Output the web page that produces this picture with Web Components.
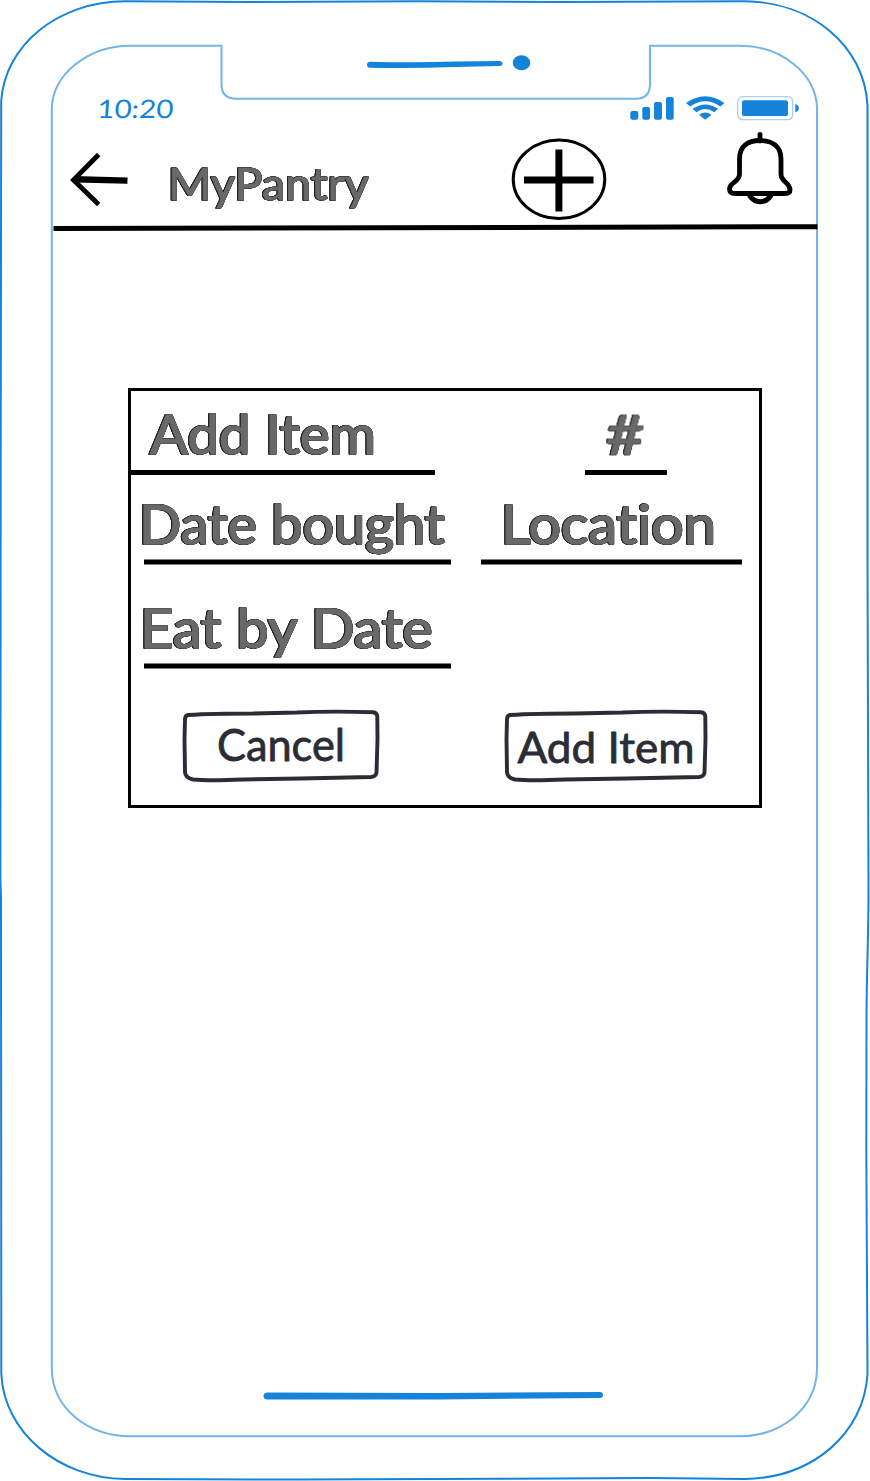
<!DOCTYPE html>
<html lang="en">
<head>
<meta charset="utf-8">
<title>MyPantry</title>
<style>
body { margin: 0; background: #fff; font-family: Lato, "Open Sans", sans-serif; font-variant-ligatures: none; }
</style>
</head>
<body>
<phone-frame>
  <phone-speaker slot="notch"></phone-speaker>
  <status-bar slot="status" time="10:20"></status-bar>
  <app-header slot="header" heading="MyPantry"></app-header>
  <item-dialog>
    <sketch-field slot="r1" label="Add Item" w="304" h="84" x="19" len="226" base="62.5" rule="79"></sketch-field>
    <sketch-field slot="r1" label="#" style="margin-left:150px" w="82" h="84" x="21" len="38" base="63.5" rule="79" slant="-1"></sketch-field>
    <sketch-field slot="r2" label="Date bought" style="margin-left:13px" w="307" h="90" x="-5" len="306" base="69" rule="84.5"></sketch-field>
    <sketch-field slot="r2" label="Location" style="margin-left:30px" w="261" h="90" x="20" len="215" base="69" rule="84.5"></sketch-field>
    <sketch-field slot="r3" label="Eat by Date" style="margin-left:13px" w="307" h="104" x="-4" len="293" base="82.5" rule="98.5"></sketch-field>
    <sketch-button slot="actions" label="Cancel" w="196" x="34" len="128" base="52" size="45"></sketch-button>
    <sketch-button slot="actions" label="Add Item" style="margin-left:126px" w="202" x="12.500" len="177" base="54" size="42.5"></sketch-button>
  </item-dialog>
  <home-indicator slot="home"></home-indicator>
</phone-frame>

<script>
const define = (name, render) => customElements.define(name, class extends HTMLElement {
  connectedCallback() {
    if (this.shadowRoot) return;
    const t = document.createElement('template');
    t.innerHTML = render(n => this.getAttribute(n));
    this.attachShadow({ mode: 'open' }).append(t.content.cloneNode(true));
  }
});

// Rounded marker lettering: a regular face thickened by a round stroke, with a hairline dark edge.
const marker = `
  .marker { fill: #696969; stroke: #696969; stroke-linejoin: round; stroke-linecap: round;
    filter: drop-shadow(.45px 0 0 #222) drop-shadow(-.45px 0 0 #222) drop-shadow(0 .3px 0 #222); }`;

define('phone-frame', () => `
<style>
  :host { display: grid; grid-template-rows: 90px 35px 107px 156px 1fr auto; position: relative; isolation: isolate; box-sizing: border-box; width: 870px; height: 1481px; overflow: hidden; }
  .frame { position: absolute; inset: 0; z-index: -1; }
  main { grid-row: 5; padding-left: 128px; }
  slot[name=home] { display: block; grid-row: 6; }
</style>
<svg class="frame" width="870" height="1481" fill="none">
  <path d="M1 898L.4 880L.7 450L1.2 101C5 45 58 1.500 125 1.300L250 2L420 1.200L560 2L745 1.300C811 2 864 45 867.500 105L867.500 560L868.500 890C868.500 940 866.600 970 866.500 1020L866.300 1150L867.500 1374C864 1434 812 1478 745 1479L650 1478L500 1478.700L300 1479.600L125 1479C58 1478 4 1432 1.300 1374L1 898" stroke="#1683da" stroke-width="2"/>
  <path d="M130 45.700H221.500V84Q221.500 98.700 236 98.700H636Q650 98.700 650 84V45.700H740C783 46 816 75 817 108V1370C816 1407 783 1436 740 1436.300H130C87 1436 53 1408 51.800 1370V108C53 75 87 46 130 45.700Z" stroke="#73b4e9" stroke-width="2"/>
</svg>
<slot name="notch"></slot><slot name="status"></slot><slot name="header"></slot>
<main><slot></slot></main>
<slot name="home"></slot>`);

define('phone-speaker', () => `
<style>:host { display: flex; padding: 50px 0 0 365px; } svg { display: block; }</style>
<svg width="170" height="26" fill="#1683da">
  <path d="M5 11.700Q50 13 90 11.600L134 11Q137.500 11 137.500 13.500T134 16L90 17Q50 18.500 5 17.700Q2 17.500 2 14.700T5 11.700Z"/>
  <ellipse cx="156.500" cy="12.700" rx="8.800" ry="7.500"/>
</svg>`);

define('status-bar', a => `
<style>
  :host { display: flex; justify-content: space-between; padding: 0 70px 0 96px; height: 35px; }
  svg { display: block; }
</style>
<svg width="90" height="35"><g transform="translate(.8 28) skewX(-4)"><text font-size="25.500" fill="#1683da" textLength="76" lengthAdjust="spacingAndGlyphs">${a('time')}</text></g></svg>
<svg width="170" height="35" viewBox="630 90 170 35" fill="#1683da">
  <rect x="630.300" y="111" width="8" height="8.800" rx="2"/><rect x="642.300" y="107" width="7.800" height="12.800" rx="2"/>
  <rect x="654" y="102" width="8" height="17.800" rx="2"/><rect x="666" y="97" width="7.700" height="22.800" rx="2"/>
  <path d="M686 103Q705.200 89.500 724.500 103L720.300 106.500Q705.200 96 690.200 106.500Z"/>
  <path d="M692.500 109Q705.200 100 718.200 109L714.200 112.200Q705.200 106 696.500 112.200Z"/>
  <path d="M699 114.700Q705.200 110.500 711.500 114.700L705.200 119.800Z"/>
  <rect x="737.700" y="96.700" width="55" height="23" rx="5" fill="none" stroke="#a5d0f1" stroke-width="1.300"/>
  <rect x="742" y="100.300" width="46" height="15.800" rx="2.200"/>
  <path d="M795.300 104Q798.800 105 798.800 108.200T795.300 112.300Z"/>
</svg>`);

define('app-header', a => `
<style>
  :host { display: flex; flex-direction: column; height: 107px; }
  .bar { display: flex; height: 97px; padding-left: 68px; }
  svg { display: block; flex: none; }
  .rule { margin-left: 50px; }
  ${marker}
</style>
<div class="bar">
  <svg width="62" height="97" viewBox="68 125 62 97" fill="none" stroke="#000">
    <path d="M98.700 154.500L73.500 180L98.700 204.500" stroke-width="4.800"/><path d="M74 179.300L127.500 180.600" stroke-width="6.400"/>
  </svg>
  <svg width="260" height="97" viewBox="130 125 260 97">
    <text class="marker" x="168" y="200" font-size="45" stroke-width="1" textLength="201" lengthAdjust="spacingAndGlyphs">${a('heading')}</text>
  </svg>
  <svg width="230" height="97" viewBox="390 125 230 97" fill="none" stroke="#000">
    <ellipse cx="559" cy="179.300" rx="45.800" ry="39.200" stroke-width="3"/>
    <path d="M558.900 149.500V211.500M524 180H593.500" stroke-width="7"/>
  </svg>
  <svg width="180" height="97" viewBox="620 125 180 97" fill="none" stroke="#000" stroke-width="4.800" stroke-linecap="round">
    <path d="M760 134.500V141"/>
    <path d="M739.500 174V159C739.500 146 748 140.500 760 140.500S781 146 781 159V174C781 182.500 790 182 790 190Q790 193.500 785 193.500H735Q729.500 193.500 729.500 189C729.500 182 739.500 182.500 739.500 174Z"/>
    <path d="M750 196C755 203.500 765.500 203.500 770.500 196" stroke-width="5"/><path d="M752 192.500H768" stroke-width="3"/>
  </svg>
</div>
<svg class="rule" width="768" height="10"><path d="M3.500 6.400L767.500 4.700" stroke="#000" stroke-width="5"/></svg>`);

define('item-dialog', () => `
<style>
  :host { display: flex; flex-direction: column; box-sizing: border-box; width: 634px; height: 420px; border: 3px solid #000; }
  div { display: flex; }
  .actions { padding: 40px 0 0 52px; }
</style>
<div><slot name="r1"></slot></div>
<div><slot name="r2"></slot></div>
<div><slot name="r3"></slot></div>
<div class="actions"><slot name="actions"></slot></div>`);

define('sketch-field', a => `
<style>:host { display: block; flex: none; } svg { display: block; overflow: visible; } ${marker}</style>
<svg width="${a('w')}" height="${a('h')}">
  <g transform="translate(${a('x')} ${a('base')}) skewX(${a('slant') || 0})">
    <text class="marker" font-size="55" stroke-width="1.400" textLength="${a('len')}" lengthAdjust="spacingAndGlyphs">${a('label')}</text>
  </g>
  <rect y="${a('rule')}" width="${a('w')}" height="5"/>
</svg>`);

define('sketch-button', a => {
  const w = +a('w');
  return `
<style>
  :host { display: block; flex: none; }
  button { display: block; padding: 0; border: 0; background: none; font: inherit; }
  svg { display: block; overflow: visible; }
</style>
<button><svg width="${w}" height="72" fill="none">
  <path d="M5 6Q30 4.500 70 4.500L${w * .58} 3.500Q${w * .75} 2 ${w - 6} 3.200Q${w - 2} 3.500 ${w - 1.700} 7.500L${w - 1.500} 30L${w - 2.500} 63.500Q${w - 3} 67.500 ${w - 8} 68L${w * .6} 69.500L60 70.500Q25 72 10 70.500Q2 68.500 2 63L1.500 30L2 10.500Q2 6.500 5 6Z" stroke="#2a2d35" stroke-width="3.900"/>
  <text x="${a('x')}" y="${a('base')}" font-size="${a('size')}" fill="#2a2d35" stroke="#2a2d35" stroke-width=".8" stroke-linejoin="round" textLength="${a('len')}" lengthAdjust="spacingAndGlyphs">${a('label')}</text>
</svg></button>`;
});

define('home-indicator', () => `
<style>:host { display: block; padding: 0 0 78px 262px; } svg { display: block; }</style>
<svg width="344" height="14" viewBox="262 1389 344 14"><path d="M267 1392.500L440 1393L600 1392Q603 1392 603 1395T600 1398L440 1399.500L267 1399.500Q263.500 1399 263.500 1396T267 1392.500Z" fill="#1683da"/></svg>`);
</script>
</body>
</html>
